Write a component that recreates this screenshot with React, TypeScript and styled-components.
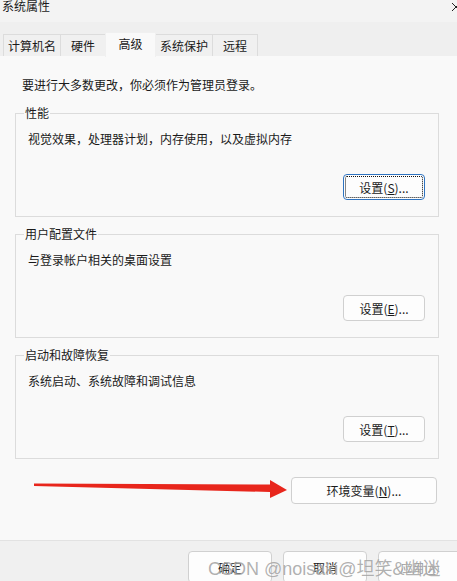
import React from 'react'
import styled, { createGlobalStyle } from 'styled-components'

const GlobalStyle = createGlobalStyle`
  html, body {
    margin: 0;
    padding: 0;
    overflow: hidden;
    background: #f9f9f9;
  }
  * {
    box-sizing: border-box;
  }
`

const Window = styled.div`
  width: 457px;
  height: 581px;
  display: flex;
  flex-direction: column;
  overflow: hidden;
  font-family: "Noto Sans CJK SC", "Noto Sans", sans-serif;
  font-size: 12px;
  color: #1a1a1a;
`

const TitleBar = styled.div`
  height: 22px;
  flex-shrink: 0;
  display: flex;
  justify-content: space-between;
  align-items: flex-start;
  background: #f3f3f3;
  padding-left: 2px;
  line-height: 12px;
`

const CloseIcon = styled.svg`
  width: 10px;
  height: 10px;
  margin-top: 2px;
  margin-right: -4px;
`

const TabStrip = styled.div`
  height: 34px;
  flex-shrink: 0;
  display: flex;
  align-items: flex-end;
  padding-left: 3px;
  background: #efefef;
`

const Tab = styled.div<{ $active?: boolean }>`
  height: ${p => (p.$active ? '25px' : '22px')};
  min-width: ${p => (p.$active ? '51px' : '46px')};
  padding: 0 4px;
  margin-left: -1px;
  margin-bottom: ${p => (p.$active ? '-1px' : '0')};
  display: flex;
  align-items: center;
  justify-content: center;
  padding-bottom: ${p => (p.$active ? '4px' : '0')};
  background: ${p => (p.$active ? '#f9f9f9' : '#f0f0f0')};
  border: 1px solid ${p => (p.$active ? '#f0f0f0' : '#dcdcdc')};
  border-bottom: none;
  position: relative;
  z-index: ${p => (p.$active ? 1 : 0)};
  &:first-child {
    margin-left: 0;
  }
`

const Content = styled.div`
  flex: 1;
  background: #f9f9f9;
  padding: 21px 18px 0 15px;
  display: flex;
  flex-direction: column;
`

const Intro = styled.div`
  line-height: 16px;
  padding-left: 7px;
  margin-bottom: 12px;
`

const Group = styled.fieldset`
  margin: 0 0 9px;
  padding: 10px 13px 16px 12px;
  border: 1px solid #dcdcdc;
  min-width: 0;
`

const Legend = styled.legend`
  padding: 0 1px;
  margin-left: -4px;
  line-height: 16px;
`

const GroupText = styled.div`
  line-height: 16px;
  margin-bottom: 27px;
`

const ButtonRow = styled.div`
  display: flex;
  justify-content: flex-end;
`

const Button = styled.button<{ $focused?: boolean; $width?: number; $disabled?: boolean }>`
  width: ${p => p.$width ?? 82}px;
  height: 26px;
  background: #fdfdfd;
  border: 1px solid ${p => (p.$focused ? '#2f73c0' : '#d0d0d0')};
  border-radius: 4px;
  font-family: inherit;
  font-size: 12px;
  color: ${p => (p.$disabled ? '#9a9a9a' : '#1a1a1a')};
  padding: 0;
  outline: ${p => (p.$focused ? '1px dotted #111' : 'none')};
  outline-offset: -3px;
  flex-shrink: 0;
`

const EnvRow = styled.div`
  position: relative;
  display: flex;
  justify-content: flex-end;
  margin-top: 9px;
  margin-right: 2px;
`

const EnvButton = styled(Button)`
  height: 27px;
`

// red annotation arrow drawn over the dialog, coords are page x
const Arrow = styled.svg`
  position: absolute;
  left: -15px;
  top: 0;
  width: 300px;
  height: 30px;
`

const Footer = styled.div`
  position: relative;
  height: 41px;
  flex-shrink: 0;
  background: #f0f0f0;
  border-top: 1px solid #e2e2e2;
  display: flex;
  gap: 11px;
  padding: 10px 0 0 188px;
`

const FooterButton = styled(Button)`
  height: 32px;
  width: 84px;
`

const Watermark = styled.div`
  position: absolute;
  left: 208px;
  top: 13px;
  font-family: "Liberation Sans", "Noto Sans CJK SC", sans-serif;
  font-size: 18px;
  color: rgba(110, 110, 110, 0.55);
  white-space: nowrap;
  text-shadow: 0 0 1px rgba(255, 255, 255, 0.8);
  pointer-events: none;
`

const groups = [
  { title: '性能', text: '视觉效果，处理器计划，内存使用，以及虚拟内存', key: 'S', focused: true },
  { title: '用户配置文件', text: '与登录帐户相关的桌面设置', key: 'E' },
  { title: '启动和故障恢复', text: '系统启动、系统故障和调试信息', key: 'T' },
]

const tabs = ['计算机名', '硬件', '高级', '系统保护', '远程']

const App: React.FC = () => {
  return (
    <Window>
      <GlobalStyle />
      <TitleBar>
        <span>系统属性</span>
        <CloseIcon viewBox="0 0 10 10">
          <path d="M1 1 L9 9 M9 1 L1 9" stroke="#222" strokeWidth="1" />
        </CloseIcon>
      </TitleBar>
      <TabStrip>
        {tabs.map(t => (
          <Tab key={t} $active={t === '高级'}>{t}</Tab>
        ))}
      </TabStrip>
      <Content>
        <Intro>要进行大多数更改，你必须作为管理员登录。</Intro>
        {groups.map(g => (
          <Group key={g.title}>
            <Legend>{g.title}</Legend>
            <GroupText>{g.text}</GroupText>
            <ButtonRow>
              <Button $focused={g.focused}>
                设置(<u>{g.key}</u>)...
              </Button>
            </ButtonRow>
          </Group>
        ))}
        <EnvRow>
          <Arrow viewBox="0 0 300 30">
            <polygon
              points="34,6.5 270,7.5 270,3 287,13 270,21 270,15 34,9"
              fill="#e8261c"
            />
          </Arrow>
          <EnvButton $width={146}>
            环境变量(<u>N</u>)...
          </EnvButton>
        </EnvRow>
      </Content>
      <Footer>
        <FooterButton>确定</FooterButton>
        <FooterButton>取消</FooterButton>
        <FooterButton $disabled>应用(<u>A</u>)</FooterButton>
        <Watermark>CSDN @noisaki@坦笑&amp;幽迷</Watermark>
      </Footer>
    </Window>
  )
}

export default App
